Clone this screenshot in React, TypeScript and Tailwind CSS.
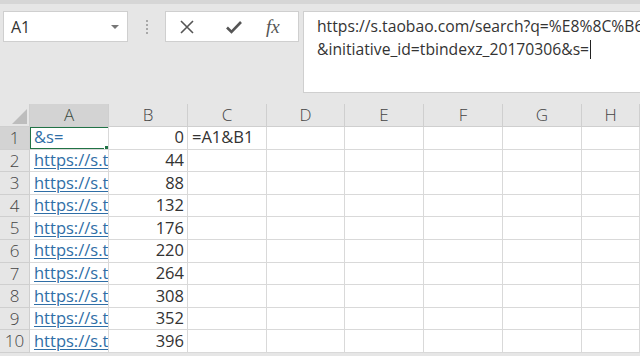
import React from 'react'

const cols = ['A', 'B', 'C', 'D', 'E', 'F', 'G', 'H']
const nums = [0, 44, 88, 132, 176, 220, 264, 308, 352, 396]
const font = { fontFamily: '"Open Sans", "Noto Sans", "Noto Sans CJK SC", sans-serif' }

const App = (): React.ReactElement => {
  return (
    <div className="w-[640px] h-[356px] overflow-hidden bg-[#e6e6e6] text-[#333]" style={font}>
      <div className="h-[4px] bg-[#d6d6d6]" />
      {/* formula bar */}
      <div className="flex items-start pt-[7px] h-[100px]">
        <div className="ml-[3px] w-[125px] h-[31px] bg-white border border-[#cfcfcf] flex items-center justify-between pl-[7px] pr-[8px]">
          <span className="text-[16px]">A1</span>
          <span className="w-0 h-0 border-l-[4px] border-r-[4px] border-t-[4px] border-l-transparent border-r-transparent border-t-[#777]" />
        </div>
        <div className="w-[37px] h-[31px] flex flex-col items-center justify-center gap-[2px]">
          <span className="w-[2px] h-[2px] bg-[#a8a8a8]" />
          <span className="w-[2px] h-[2px] bg-[#a8a8a8]" />
          <span className="w-[2px] h-[2px] bg-[#a8a8a8]" />
          <span className="w-[2px] h-[2px] bg-[#a8a8a8]" />
        </div>
        <div className="w-[134px] h-[31px] bg-white border border-[#cfcfcf] flex items-center">
          <svg width="16" height="16" viewBox="0 0 16 16" className="ml-[13px]">
            <path d="M2 2 L14 14 M14 2 L2 14" stroke="#555" strokeWidth="1.6" fill="none" />
          </svg>
          <svg width="18" height="16" viewBox="0 0 18 16" className="ml-[30px]">
            <path d="M2 8.5 L6.5 13 L16 3" stroke="#555" strokeWidth="2.6" fill="none" />
          </svg>
          <span
            className="ml-[23px] text-[19px] italic text-[#555] leading-none"
            style={{ fontFamily: '"Liberation Serif", "DejaVu Serif", serif' }}
          >
            fx
          </span>
        </div>
        <div className="ml-[4px] flex-1 h-[82px] bg-white border border-[#cfcfcf] border-r-0 pl-[13px] pt-[3px] text-[15.7px] leading-[23px] whitespace-nowrap overflow-hidden">
          <div>https://s.taobao.com/search?q=%E8%8C%B6</div>
          <div className="flex items-center">
            &amp;initiative_id=tbindexz_20170306&amp;s=
            <span className="inline-block w-px h-[19px] bg-[#222] ml-[1px]" />
          </div>
        </div>
      </div>
      {/* sheet */}
      <div className="grid grid-cols-[30px_79px_79px_79px_78px_79px_79px_79px_58px] bg-white">
        <div className="h-[23px] bg-[#e6e6e6] border-r border-b border-[#cfcfcf] relative">
          <span className="absolute right-[2px] bottom-[2px] w-0 h-0" style={{ borderRight: '15px solid #bdbdbd', borderTop: '15px solid transparent' }} />
        </div>
        {cols.map((c) => (
          <div
            key={c}
            className={`h-[23px] border-r border-b border-[#cfcfcf] flex items-center justify-center text-[17px] font-light ${c === 'A' ? 'bg-[#d3d3d3] text-[#3a4a40]' : 'bg-[#e6e6e6] text-[#444]'}`}
          >
            {c}
          </div>
        ))}
        {nums.map((n, i) => (
          <React.Fragment key={n}>
            <div
              className={`h-[22.6px] border-r border-b border-[#cfcfcf] flex items-center justify-center text-[17px] font-light text-[#444] ${i === 0 ? 'bg-[#d3d3d3]' : 'bg-[#e6e6e6]'}`}
            >
              {i + 1}
            </div>
            <div className="h-[22.6px] border-r border-b border-[#d9d9d9] relative overflow-hidden whitespace-nowrap pl-[4px] text-[16.5px] text-[#2f6ea6] flex items-center">
              {i === 0 ? (
                <>
                  <span>&amp;s=</span>
                  <span className="absolute -left-px -top-px w-[81px] h-[24px] border-2 border-[#217346]" />
                  <span className="absolute right-[-1px] bottom-[-1px] w-[5px] h-[5px] bg-[#217346] border border-white" />
                </>
              ) : (
                <span className="underline underline-offset-2">https://s.t</span>
              )}
            </div>
            <div className="h-[22.6px] border-r border-b border-[#d9d9d9] flex items-center justify-end pr-[3px] text-[16.5px] text-[#333]">
              {n}
            </div>
            <div className="h-[22.6px] border-r border-b border-[#d9d9d9] flex items-center pl-[4px] text-[16.5px] text-[#333] whitespace-nowrap">
              {i === 0 ? '=A1&B1' : ''}
            </div>
            {[0, 1, 2, 3, 4].map((k) => (
              <div key={k} className="h-[22.6px] border-r border-b border-[#d9d9d9]" />
            ))}
          </React.Fragment>
        ))}
      </div>
    </div>
  )
}

export default App
